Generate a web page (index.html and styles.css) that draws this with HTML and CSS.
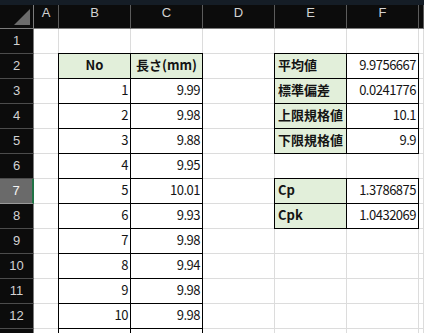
FILE: index.html
```html
<!DOCTYPE html>
<html lang="ja">
<head>
<meta charset="utf-8">
<title>工程能力</title>
<link rel="stylesheet" href="styles.css">
</head>
<body>
<div class="sheet">
  <div class="titlebar"></div>

  <!-- column headers -->
  <div class="corner"><svg class="corner-mark" width="16" height="16" viewBox="0 0 16 16"><polygon points="16,0 16,16 0,16"/></svg></div>
  <div class="col-hd">A</div>
  <div class="col-hd">B</div>
  <div class="col-hd">C</div>
  <div class="col-hd">D</div>
  <div class="col-hd">E</div>
  <div class="col-hd">F</div>
  <div class="col-hd"></div>

  <!-- row 1 -->
  <div class="row-hd">1</div>
  <div class="c"></div><div class="c"></div><div class="c"></div><div class="c"></div><div class="c"></div><div class="c"></div><div class="c"></div>

  <!-- row 2 -->
  <div class="row-hd">2</div>
  <div class="c"></div>
  <div class="c box fill ctr b">No</div>
  <div class="c box fill ctr b">長さ(mm)</div>
  <div class="c"></div>
  <div class="c box fill lbl b">平均値</div>
  <div class="c box num">9.9756667</div>
  <div class="c"></div>

  <!-- row 3 -->
  <div class="row-hd">3</div>
  <div class="c"></div>
  <div class="c box num">1</div>
  <div class="c box num">9.99</div>
  <div class="c"></div>
  <div class="c box fill lbl b">標準偏差</div>
  <div class="c box num">0.0241776</div>
  <div class="c"></div>

  <!-- row 4 -->
  <div class="row-hd">4</div>
  <div class="c"></div>
  <div class="c box num">2</div>
  <div class="c box num">9.98</div>
  <div class="c"></div>
  <div class="c box fill lbl b">上限規格値</div>
  <div class="c box num">10.1</div>
  <div class="c"></div>

  <!-- row 5 -->
  <div class="row-hd">5</div>
  <div class="c"></div>
  <div class="c box num">3</div>
  <div class="c box num">9.88</div>
  <div class="c"></div>
  <div class="c box fill lbl b">下限規格値</div>
  <div class="c box num">9.9</div>
  <div class="c"></div>

  <!-- row 6 -->
  <div class="row-hd">6</div>
  <div class="c"></div>
  <div class="c box num">4</div>
  <div class="c box num">9.95</div>
  <div class="c"></div>
  <div class="c"></div>
  <div class="c"></div>
  <div class="c"></div>

  <!-- row 7 (active row) -->
  <div class="row-hd sel">7</div>
  <div class="c"></div>
  <div class="c box num">5</div>
  <div class="c box num">10.01</div>
  <div class="c"></div>
  <div class="c box fill lbl b">Cp</div>
  <div class="c box num">1.3786875</div>
  <div class="c"></div>

  <!-- row 8 -->
  <div class="row-hd">8</div>
  <div class="c"></div>
  <div class="c box num">6</div>
  <div class="c box num">9.93</div>
  <div class="c"></div>
  <div class="c box fill lbl b">Cpk</div>
  <div class="c box num">1.0432069</div>
  <div class="c"></div>

  <!-- row 9 -->
  <div class="row-hd">9</div>
  <div class="c"></div>
  <div class="c box num">7</div>
  <div class="c box num">9.98</div>
  <div class="c"></div><div class="c"></div><div class="c"></div><div class="c"></div>

  <!-- row 10 -->
  <div class="row-hd">10</div>
  <div class="c"></div>
  <div class="c box num">8</div>
  <div class="c box num">9.94</div>
  <div class="c"></div><div class="c"></div><div class="c"></div><div class="c"></div>

  <!-- row 11 -->
  <div class="row-hd">11</div>
  <div class="c"></div>
  <div class="c box num">9</div>
  <div class="c box num">9.98</div>
  <div class="c"></div><div class="c"></div><div class="c"></div><div class="c"></div>

  <!-- row 12 -->
  <div class="row-hd">12</div>
  <div class="c"></div>
  <div class="c box num">10</div>
  <div class="c box num">9.98</div>
  <div class="c"></div><div class="c"></div><div class="c"></div><div class="c"></div>

  <!-- row 13 (cut off by the window edge) -->
  <div class="row-hd"></div>
  <div class="c"></div>
  <div class="c box"></div>
  <div class="c box"></div>
  <div class="c"></div><div class="c"></div><div class="c"></div><div class="c"></div>
</div>
</body>
</html>
```

FILE: styles.css
```css
* {
  box-sizing: border-box;
}

html,
body {
  margin: 0;
  padding: 0;
}

body {
  width: 424px;
  height: 333px;
  overflow: hidden;
  background: #ffffff;
  font-family: "Noto Sans CJK JP", "Noto Sans", sans-serif;
}

/* worksheet grid: row-header column, A, B..F, and the sliver of G;
   the last row is cut off by the window */
.sheet {
  display: grid;
  grid-template-columns: 34px 25px repeat(5, 72px) 1fr;
  grid-template-rows: 5px 24px repeat(12, 25px) 4px;
  height: 333px;
  overflow: hidden;
}

.titlebar {
  grid-column: 1 / -1;
  background: #151d26;
}

/* select-all corner */
.corner {
  background: #0c0c0c;
  border-right: 1px solid #7c7c7c;
  border-bottom: 1px solid #7c7c7c;
  display: flex;
  justify-content: flex-end;
  align-items: flex-end;
  padding: 0 3px 3px 0;
}

.corner-mark {
  display: block;
  fill: #6c6c6c;
}

.col-hd {
  background: #0c0c0c;
  color: #d2d2d2;
  border-right: 1px solid #5c5c5c;
  border-bottom: 1px solid #7c7c7c;
  font: 13px/15px "Liberation Sans", Arial, sans-serif;
  text-align: center;
}

.row-hd {
  background: #0c0c0c;
  color: #d2d2d2;
  border-right: 1px solid #7c7c7c;
  border-bottom: 1px solid #4c4c4c;
  font: 13px/24px "Liberation Sans", Arial, sans-serif;
  text-align: center;
  overflow: hidden;
}

.row-hd.sel {
  background: #6a6a6a;
  color: #f4f4f4;
  border-right: 2px solid #217346;
  border-bottom-color: #9a9a9a;
}

/* worksheet cells */
.c {
  border-right: 1px solid #dcdcdc;
  border-bottom: 1px solid #dcdcdc;
  font-size: 13px;
  line-height: 21px;
  color: #141414;
  white-space: nowrap;
  overflow: hidden;
}

/* the partial last row shows no bottom gridline */
.c:nth-last-child(-n+7),
.row-hd:nth-last-child(8) {
  border-bottom: 0;
}

/* thin black cell border: own right/bottom edge plus the shared top/left edge */
.box {
  border-right-color: #000000;
  border-bottom-color: #000000;
  box-shadow: -1px -1px 0 #000000, 0 -1px 0 #000000, -1px 0 0 #000000;
}

.fill {
  background: #e2efda;
}

.b {
  font-weight: 700;
}

.ctr {
  text-align: center;
}

.lbl {
  text-align: left;
  padding-left: 3px;
}

.num {
  text-align: right;
  padding-right: 2px;
  letter-spacing: -0.5px;
}
```
